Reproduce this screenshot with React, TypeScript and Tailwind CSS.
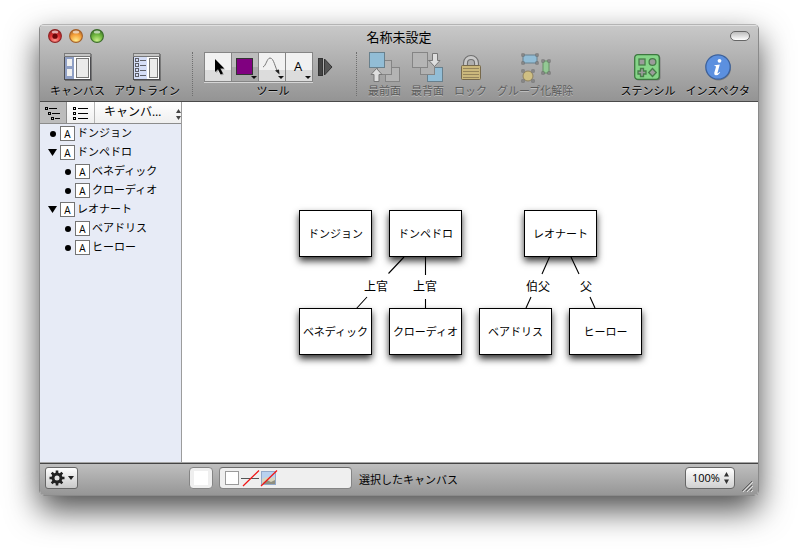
import React from "react";

const labelShadow = "[text-shadow:0_1px_0_rgba(255,255,255,0.35)]";

function TrafficLight({ label, inner, mid, outer, dot }: { label: string; inner: string; mid: string; outer: string; dot?: boolean }) {
  const id = "light-" + label;
  return (
    <button type="button" aria-label={label} className="block size-[14px]">
      <svg viewBox="0 0 14 14" className="size-[14px]">
        <defs>
          <radialGradient id={id} cx="0.5" cy="0.85" r="0.85">
            <stop offset="0" stopColor={inner} />
            <stop offset="0.55" stopColor={mid} />
            <stop offset="1" stopColor={outer} />
          </radialGradient>
        </defs>
        <circle cx="7" cy="7" r="6.4" fill={`url(#${id})`} stroke={outer} strokeWidth="1.1" />
        <ellipse cx="7" cy="3" rx="3.2" ry="1.6" fill="#fff" opacity="0.6" />
        {dot && <circle cx="7" cy="7.2" r="2.6" fill="#6b0508" />}
      </svg>
    </button>
  );
}

function ToolbarItem({ label, disabled, children }: { label: string; disabled?: boolean; children: React.ReactNode }) {
  return (
    <button type="button" disabled={disabled} className="flex shrink-0 flex-col items-center gap-px">
      <span className="flex h-[30px] items-center justify-center">{children}</span>
      <span className={`text-[11px] leading-[15px] whitespace-nowrap ${labelShadow} ${disabled ? "text-[#5c5c5c]" : "text-black"}`}>{label}</span>
    </button>
  );
}

function Separator() {
  return <span className="h-11 w-px shrink-0 border-l border-dotted border-[#6f6f6f]" />;
}

function CanvasIcon() {
  return (
    <svg width="28" height="28" viewBox="0 0 28 28">
      <rect x="1" y="1" width="27" height="27" fill="#000" opacity="0.3" />
      <rect x="0.5" y="0.5" width="26" height="26" fill="#fff" stroke="#7a7a7a" />
      <rect x="1" y="1" width="25" height="2" fill="#c6c6c6" />
      <path d="M1 3.5H26" stroke="#777" />
      <rect x="1" y="4" width="9" height="22" fill="#8f9fc4" />
      <rect x="3" y="6" width="5" height="7" fill="#f0f0f0" />
      <rect x="3" y="16" width="5" height="7" fill="#f0f0f0" />
      <rect x="12.5" y="5.500" width="12" height="19" fill="#ebebeb" stroke="#777" />
      <path d="M0 26.500H27M26.500 4V27M0.500 4V27" stroke="#4c4c50" />
    </svg>
  );
}

function OutlineIcon() {
  return (
    <svg width="28" height="28" viewBox="0 0 28 28">
      <rect x="1" y="1" width="27" height="27" fill="#000" opacity="0.3" />
      <rect x="0.5" y="0.5" width="26" height="26" fill="#fff" stroke="#7a7a7a" />
      <rect x="1" y="1" width="25" height="2" fill="#c6c6c6" />
      <path d="M1 3.5H26" stroke="#777" />
      <rect x="1" y="4" width="13" height="22" fill="#d5def7" />
      {[5.5, 10.5, 15.5, 20.5].map((y) => (
        <g key={y} stroke="#5f6068" fill="none">
          <rect x="2.500" y={y} width="3" height="3" />
          <path d={`M7 ${y + 2}H13`} />
        </g>
      ))}
      <rect x="16.5" y="5.500" width="8" height="19" fill="#ebebeb" stroke="#777" />
      <path d="M0 26.500H27M26.500 4V27M0.500 4V27" stroke="#4c4c50" />
    </svg>
  );
}

function FrontIcon() {
  return (
    <svg width="32" height="32" viewBox="0 0 32 32">
      <g fill="#b4b4b4" stroke="#858585">
        <rect x="16.500" y="16.500" width="14" height="14" />
        <rect x="8.500" y="9.500" width="14" height="14" />
      </g>
      <rect x="0.500" y="1.500" width="15" height="15" fill="#92bdd6" stroke="#68808d" />
      <path d="M7.500 17.500L13 23.500H10V30.500H5V23.500H2Z" fill="#dedede" stroke="#777" />
    </svg>
  );
}

function BackIcon() {
  return (
    <svg width="32" height="32" viewBox="0 0 32 32">
      <rect x="15.500" y="16.500" width="15" height="14" fill="#92bdd6" stroke="#68808d" />
      <rect x="8.500" y="9.500" width="14" height="14" fill="#b1b1b1" stroke="#858585" />
      <rect x="0.500" y="1.500" width="15" height="15" fill="#b5b5b5" stroke="#858585" />
      <path d="M20.500 2.500H25.500V9.500H28L22.500 15.500L17 9.500H20.500Z" fill="#dedede" stroke="#777" />
    </svg>
  );
}

function LockIcon() {
  return (
    <svg width="22" height="28" viewBox="0 -2 22 28">
      <path d="M5.500 11V8a5.500 5.500 0 0 1 11 0v3" fill="none" stroke="#707070" strokeWidth="5" />
      <path d="M5.500 11V8a5.500 5.500 0 0 1 11 0v3" fill="none" stroke="#c9c9c9" strokeWidth="2.800" />
      <rect x="1.500" y="10.500" width="19" height="14" rx="1" fill="#cbb87c" stroke="#77694b" />
      <path d="M3 13.500H19M3 16.500H19M3 19.500H19M3 22.500H19" stroke="#96855c" />
    </svg>
  );
}

function UngroupIcon() {
  const handles = [
    [2, 2], [16, 2], [2, 10], [16, 10],
    [22, 8], [28, 8], [22, 20], [28, 20],
    [2, 18], [12, 18], [2, 28], [12, 28],
  ];
  return (
    <svg width="32" height="32" viewBox="-2 -2 32 32">
      <rect x="2" y="2" width="14" height="8" fill="#92bdd6" stroke="#66808e" />
      <rect x="22" y="8" width="6" height="12" fill="#93c894" stroke="#659065" />
      <circle cx="7" cy="23" r="5" fill="#cfbf83" stroke="#8f825f" />
      {handles.map(([x, y]) => (
        <rect key={`${x}-${y}`} x={x - 1} y={y - 1} width="2" height="2" fill="#e8e8e8" stroke="#666" />
      ))}
    </svg>
  );
}

function StencilIcon() {
  return (
    <svg width="27" height="27" viewBox="0 0 27 27">
      <rect x="1.500" y="1.500" width="25" height="25" rx="3" fill="#000" opacity="0.25" />
      <rect x="0.700" y="0.700" width="24.600" height="24.600" rx="3" fill="#85d588" stroke="#3c783f" strokeWidth="1.300" />
      <g fill="#9b9b9b" stroke="#477e49" strokeWidth="1.300">
        <rect x="5" y="5" width="6" height="6" />
        <circle cx="18.500" cy="8" r="3.400" />
        <path d="M6.500 14.500h3v2.500h2.500v3h-2.500v2.500h-3v-2.500h-2.500v-3h2.500z" />
        <path d="M18.500 14.500l3.800 4-3.800 4-3.800-4z" />
      </g>
    </svg>
  );
}

function InspectorIcon() {
  return (
    <svg width="26" height="27" viewBox="0 0 26 27">
      <circle cx="13.500" cy="14" r="12.500" fill="#000" opacity="0.25" />
      <circle cx="13" cy="13" r="12.200" fill="#5c90df" stroke="#3d629c" strokeWidth="1.300" />
      <circle cx="14.500" cy="6.800" r="1.900" fill="#fff" />
      <path d="M9.500 11.300L14.800 10.500L12.500 18.700Q12.300 20 13.500 19.100L14.700 18L15.200 18.500Q13.100 21.500 10.700 21.300Q8.700 21 9.300 18.800L11.100 12.500Q11.100 12 9.500 12Z" fill="#fff" />
    </svg>
  );
}

const corner = <path d="M19 23h6l-3 3z" fill="#111" />;

function Tool({ label, active, children }: { label: string; active?: boolean; children: React.ReactNode }) {
  return (
    <button
      type="button"
      aria-label={label}
      aria-pressed={!!active}
      className={`h-7 w-[26px] ${active ? "bg-linear-to-b from-[#bdbdbd] from-50% to-[#a9a9a9] to-50%" : "bg-linear-to-b from-[#f1f1f1] from-60% to-[#dcdcdc] to-60%"}`}
    >
      <svg width="26" height="28" viewBox="0 0 26 28">{children}</svg>
    </button>
  );
}

function Tools() {
  return (
    <div role="group" aria-label="ツール" className="flex w-[138px] shrink-0 flex-col items-center gap-px">
      <div className="flex h-[30px] w-full items-center gap-[5px]">
        <div className="flex gap-px border border-[#858585] bg-[#858585] shadow-[0_1px_0_#d5d5d5]">
          <Tool label="選択">
            <path d="M10 6v13l3-2.800 2.600 5.400 2.300-1.100-2.600-5.100h4z" fill="#000" opacity="0.25" transform="translate(1 1)" />
            <path d="M10 6v13l3-2.800 2.600 5.400 2.300-1.100-2.600-5.100h4z" fill="#000" />
          </Tool>
          <Tool label="図形" active>
            <rect x="4.500" y="5.500" width="16" height="16" fill="#800080" stroke="#333" />
            {corner}
          </Tool>
          <Tool label="線">
            <path d="M4 14C7 13 8 5 11 5C15 5 16 15 19 19" fill="none" stroke="#777" />
            <path d="M16 17.500l4-1 .5 5z" fill="#222" />
            {corner}
          </Tool>
          <Tool label="テキスト">
            <text x="12" y="18" textAnchor="middle" fontSize="13" fontFamily="Open Sans" fill="#000">A</text>
            {corner}
          </Tool>
        </div>
        <button type="button" aria-label="その他のツール">
          <svg width="15" height="18" viewBox="0 0 15 18">
            <rect x="0.500" y="0.500" width="4" height="17" fill="#444" stroke="#333" />
            <path d="M6.500 1L14 9L6.500 17Z" fill="#555" stroke="#333" />
          </svg>
        </button>
      </div>
      <span className={`text-[11px] leading-[15px] ${labelShadow}`}>ツール</span>
    </div>
  );
}

type Item = { name: string; children?: Item[] };

const outline: Item[] = [
  { name: "ドンジョン" },
  { name: "ドンペドロ", children: [{ name: "ベネディック" }, { name: "クローディオ" }] },
  { name: "レオナート", children: [{ name: "ベアドリス" }, { name: "ヒーロー" }] },
];

function OutlineRow({ item }: { item: Item }) {
  return (
    <li>
      <div className="flex h-[19px] items-center">
        {item.children ? (
          <button type="button" aria-label={`${item.name}を閉じる`} aria-expanded="true" className="flex w-[13px] justify-center">
            <svg width="9" height="7" viewBox="0 0 9 7"><path d="M0 0h9L4.500 7z" /></svg>
          </button>
        ) : (
          <span className="flex w-[13px] justify-center"><span className="size-[6px] rounded-full bg-black" /></span>
        )}
        <span className="ml-px flex size-[15px] items-center justify-center border border-[#747474] bg-white font-['Open_Sans',sans-serif] text-[10px] leading-3 font-medium text-black">A</span>
        <span className="pb-[3px] pl-[2px] text-[11px] leading-4 whitespace-nowrap">{item.name}</span>
      </div>
      {item.children && (
        <ul className="pl-[15px]">
          {item.children.map((c) => <OutlineRow key={c.name} item={c} />)}
        </ul>
      )}
    </li>
  );
}

function Sidebar() {
  return (
    <aside className="flex w-[142px] shrink-0 flex-col border-r border-[#9c9c9c] bg-[#e7ebf6]">
      <div className="flex h-[22px] shrink-0 border-b border-[#8c8c8c] bg-linear-to-b from-white to-[#efefef]">
        <button type="button" aria-label="アウトライン表示" className="flex w-[27px] items-center justify-center border-r border-[#8c8c8c] bg-[#bcbcbc]">
          <svg width="16" height="14" viewBox="0 0 16 14" fill="none" stroke="#000">
            <path d="M4 2.500H12M7 7.500H15M10 12.500H15" />
            <rect x="0.500" y="1.500" width="2" height="2" /><rect x="3.500" y="6.500" width="2" height="2" /><rect x="6.500" y="11.500" width="2" height="2" />
          </svg>
        </button>
        <button type="button" aria-label="リスト表示" className="flex w-7 items-center justify-center border-r border-[#b5b5b5]">
          <svg width="16" height="14" viewBox="0 0 16 14" fill="none" stroke="#000">
            <path d="M5 2.500H15M5 7.500H15M5 12.500H15" />
            <rect x="0.500" y="1.500" width="2" height="2" /><rect x="0.500" y="6.500" width="2" height="2" /><rect x="0.500" y="11.500" width="2" height="2" />
          </svg>
        </button>
        <label className="flex min-w-0 flex-1 items-center justify-between pb-px pl-[9px]">
          <select aria-label="表示内容" className="w-[66px] appearance-none font-['Open_Sans','Noto_Sans_CJK_JP',sans-serif] text-[12px] leading-4">
            <option>キャンバ…</option>
          </select>
          <svg width="5" height="11" viewBox="0 0 5 11" className="mt-1"><path d="M0 4L2.500 0L5 4zM0 7h5L2.500 11z" fill="#444" /></svg>
        </label>
      </div>
      <ul className="pl-[6px]">
        {outline.map((item) => <OutlineRow key={item.name} item={item} />)}
      </ul>
    </aside>
  );
}

const nodes = [
  { name: "ドンジョン", at: "left-[117px] top-[108px]" },
  { name: "ドンペドロ", at: "left-[207px] top-[108px]" },
  { name: "レオナート", at: "left-[342px] top-[108px]" },
  { name: "ベネディック", at: "left-[117px] top-[206px]" },
  { name: "クローディオ", at: "left-[207px] top-[206px]" },
  { name: "ベアドリス", at: "left-[297px] top-[206px]" },
  { name: "ヒーロー", at: "left-[387px] top-[206px]" },
];

const edgeLabels = [
  { text: "上官", at: "left-[182px] top-[176px]" },
  { text: "上官", at: "left-[231px] top-[176px]" },
  { text: "伯父", at: "left-[344px] top-[176px]" },
  { text: "父", at: "left-[398px] top-[176px]" },
];

function Diagram() {
  return (
    <main className="relative min-w-0 flex-1 overflow-hidden bg-white">
      <svg width="480" height="260" viewBox="0 0 480 260" className="absolute top-0 left-0" stroke="#000" strokeWidth="1.100">
        <path d="M222 155L206.500 171.500M185 195L174 207M243.500 155V173M243.500 197V206M367.500 155L360 172M349 195L344 206M389 155L397 172M408 195L413 206" />
      </svg>
      {nodes.map((n) => (
        <div key={n.name} className={`absolute flex h-[47px] w-[73px] items-center justify-center border border-black bg-white pb-[2px] text-[11px] leading-4 whitespace-nowrap shadow-[0_4px_7px_rgba(0,0,0,0.8)] ${n.at}`}>{n.name}</div>
      ))}
      {edgeLabels.map((e) => (
        <span key={e.at} className={`absolute text-[12px] leading-4 ${e.at}`}>{e.text}</span>
      ))}
    </main>
  );
}

function StatusBar() {
  return (
    <footer className="flex h-[33px] shrink-0 items-center border-t border-[#a5a5a5] bg-linear-to-b from-[#c0c0c0] to-[#969696] pr-1 pb-[2px] pl-[5px] shadow-[inset_0_1px_0_#444]">
      <button type="button" aria-label="アクション" className="flex h-[22px] w-[33px] items-center justify-center gap-[3px] rounded-[3px] border border-[#666] bg-linear-to-b from-white to-[#c9c9c9]">
        <svg width="16" height="16" viewBox="0 0 16 16">
          <circle cx="8" cy="8" r="4" fill="none" stroke="#222" strokeWidth="3" />
          <g stroke="#222" strokeWidth="2.600">
            <path d="M8 0.500V3M8 13V15.500M0.500 8H3M13 8H15.500M2.700 2.700L4.500 4.500M11.500 11.500L13.300 13.300M2.700 13.300L4.500 11.500M11.500 4.500L13.300 2.700" />
          </g>
        </svg>
        <svg width="6" height="4" viewBox="0 0 6 4"><path d="M0 0h6L3 4z" fill="#222" /></svg>
      </button>
      <button type="button" aria-label="塗り" className="ml-[111px] flex h-[22px] w-6 items-center justify-center rounded-[4px] border border-[#858585] bg-[#efefef]">
        <span className="size-[14px] bg-white" />
      </button>
      <div className="ml-[6px] flex h-[22px] w-[133px] items-center rounded-[4px] border border-[#858585] border-t-[#6b6b6b] bg-[#efefef] pl-[5px]">
        <svg width="53" height="18" viewBox="0 0 53 18">
          <rect x="0.500" y="2.500" width="13" height="13" fill="#fff" stroke="#9a9a9a" />
          <path d="M16 9.500H34" stroke="#555" />
          <rect x="36.500" y="2.500" width="14" height="13" fill="#b8d1ef" stroke="#93a9c9" />
          <path d="M37 10L42 8L46 9L50 8V15H37Z" fill="#d8d4bd" />
          <path d="M38 14L42 11L46 13L50 11V15H38Z" fill="#8f8f80" />
          <path d="M18 17L34 1.500M36 17L52 1.500" stroke="#f01818" strokeWidth="1.300" />
        </svg>
      </div>
      <span className="ml-[7px] pt-[2px] text-[11px] leading-4 whitespace-nowrap">選択したキャンバス</span>
      <label className="relative ml-auto flex">
        <select aria-label="倍率" className="h-[22px] w-[50px] appearance-none rounded-[4px] border border-[#666] bg-linear-to-b from-white to-[#d0d0d0] pl-[6px] font-['Open_Sans',sans-serif] text-[11px] leading-4">
          <option>100%</option>
        </select>
        <svg width="5" height="12" viewBox="0 0 5 12" className="pointer-events-none absolute top-[5px] right-[6px]"><path d="M0 4.500L2.500 0L5 4.500zM0 7.500h5L2.500 12z" fill="#333" /></svg>
      </label>
      <svg width="13" height="13" viewBox="0 0 13 13" className="ml-[6px] self-end">
        <path d="M1 11L11 1M5 11L11 5M9 11L11 9" stroke="#606060" />
        <path d="M2 12L12 2M6 12L12 6M10 12L12 10" stroke="#ddd" />
      </svg>
    </footer>
  );
}

export default function App() {
  return (
    <div className="flex min-h-screen flex-col bg-white px-[39px] pt-6 pb-[54px] font-['Noto_Sans_CJK_JP',sans-serif] text-black">
      <div className="flex flex-1 flex-col overflow-hidden rounded-[5px] border border-[#8a8a8a] border-t-[#b4b4b4] shadow-[0_14px_32px_rgba(0,0,0,0.7)]">
        <header className="shrink-0 border-b border-[#4a4a4a] bg-linear-to-b from-[#c9c9c9] to-[#949494] pb-[3px] shadow-[inset_0_1px_0_#e0e0e0]">
          <div className="grid h-6 grid-cols-[1fr_auto_1fr] items-center px-2">
            <div className="flex gap-[7px] pb-[2px]">
              <TrafficLight label="閉じる" inner="#ff9a90" mid="#df2f32" outer="#8d2425" dot />
              <TrafficLight label="しまう" inner="#ffec8c" mid="#f5a13a" outer="#a4602a" />
              <TrafficLight label="拡大" inner="#c9f08b" mid="#6eb53d" outer="#3c6d2b" />
            </div>
            <h1 className="text-[13px] leading-5">名称未設定</h1>
            <div className="flex justify-end pb-[2px]">
              <button type="button" aria-label="ツールバーを隠す" className="h-[10px] w-5 rounded-full border border-[#666] bg-linear-to-b from-[#bdbdbd] to-white" />
            </div>
          </div>
          <div className="flex pt-[3px] pr-2 pl-[10px]">
            <div className="flex gap-[9px]">
              <ToolbarItem label="キャンバス"><CanvasIcon /></ToolbarItem>
              <ToolbarItem label="アウトライン"><OutlineIcon /></ToolbarItem>
            </div>
            <div className="flex gap-[11px] pl-3">
              <Separator />
              <div className="flex pr-[3px]"><Tools /></div>
              <Separator />
            </div>
            <div className="flex gap-[10px] pl-[11px]">
              <ToolbarItem label="最前面" disabled><FrontIcon /></ToolbarItem>
              <ToolbarItem label="最背面" disabled><BackIcon /></ToolbarItem>
              <ToolbarItem label="ロック" disabled><LockIcon /></ToolbarItem>
              <ToolbarItem label="グループ化解除" disabled><UngroupIcon /></ToolbarItem>
            </div>
            <div className="ml-auto flex gap-[10px]">
              <ToolbarItem label="ステンシル"><StencilIcon /></ToolbarItem>
              <ToolbarItem label="インスペクタ"><InspectorIcon /></ToolbarItem>
            </div>
          </div>
        </header>
        <div className="flex min-h-[300px] flex-1">
          <Sidebar />
          <Diagram />
        </div>
        <StatusBar />
      </div>
    </div>
  );
}
